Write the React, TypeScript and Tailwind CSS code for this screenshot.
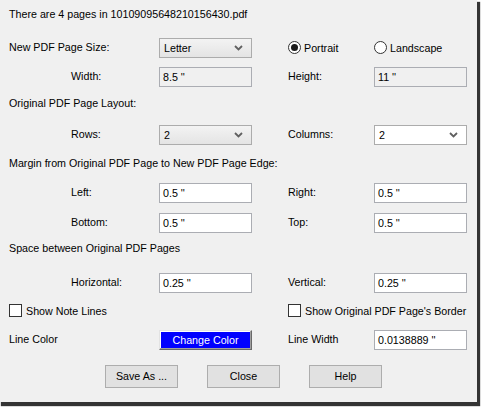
import React from 'react';

function Chevron() {
  return (
    <svg width="9" height="6" viewBox="0 0 9 6" className="shrink-0">
      <path d="M1 1 L4.5 4.5 L8 1" fill="none" stroke="#606060" strokeWidth="1.8" />
    </svg>
  );
}

function TextBox({ value, disabled }: { value: string; disabled?: boolean }) {
  return (
    <div
      className={`h-[20px] w-[93px] border border-[#abadb3] px-[3px] flex items-center ${
        disabled ? 'bg-[#f0f0f0]' : 'bg-white'
      }`}
    >
      {value}
    </div>
  );
}

function Combo({ value, editable }: { value: string; editable?: boolean }) {
  return (
    <div
      className={`h-[20px] w-[93px] border border-[#acacac] pl-[4px] pr-[8px] flex items-center justify-between ${
        editable ? 'bg-white' : 'bg-gradient-to-b from-[#f3f3f3] to-[#e4e4e4]'
      }`}
    >
      <span>{value}</span>
      <Chevron />
    </div>
  );
}

function Radio({ label, checked }: { label: string; checked?: boolean }) {
  return (
    <div className="flex items-center gap-[3px]">
      <div className="h-[13px] w-[13px] rounded-full border border-[#333] bg-white flex items-center justify-center">
        {checked && <div className="h-[7px] w-[7px] rounded-full bg-[#1a1a1a]" />}
      </div>
      <span>{label}</span>
    </div>
  );
}

function CheckBox({ label }: { label: string }) {
  return (
    <div className="flex items-center gap-[4px]">
      <div className="h-[13px] w-[13px] border border-[#333] bg-white" />
      <span>{label}</span>
    </div>
  );
}

function Button({ children }: { children: React.ReactNode }) {
  return (
    <div className="h-[23px] w-[73px] border border-[#adadad] bg-[#e1e1e1] flex items-center justify-center">
      {children}
    </div>
  );
}

// one row of the form: indented label + control, then right label + control
function FieldRow({
  label,
  control,
  rightLabel,
  rightControl,
}: {
  label: string;
  control: React.ReactNode;
  rightLabel: React.ReactNode;
  rightControl?: React.ReactNode;
}) {
  return (
    <div className="flex items-center h-[20px]">
      <div className="w-[150px] pl-[62px] pb-[2px]">{label}</div>
      {control}
      <div className="w-[36px]" />
      <div className="w-[86px] pb-[2px]">{rightLabel}</div>
      {rightControl}
    </div>
  );
}

export default function App() {
  return (
    <div className="w-[481px] h-[408px] bg-white font-['Liberation_Sans',Arial,sans-serif] text-[10.7px] text-black">
      <div className="w-[477px] h-[402px] bg-[#f0f0f0] shadow-[2px_3px_1px_1px_rgba(30,30,30,0.9)] pl-[9px] pt-[4px] flex flex-col">
        <div className="h-[20px] flex items-center">There are 4 pages in 10109095648210156430.pdf</div>

        <div className="mt-[14px] flex items-center h-[20px]">
          <div className="w-[150px] pb-[2px]">New PDF Page Size:</div>
          <Combo value="Letter" />
          <div className="w-[36px]" />
          <div className="w-[86px]">
            <Radio label="Portrait" checked />
          </div>
          <Radio label="Landscape" />
        </div>

        <div className="mt-[9px]">
          <FieldRow
            label="Width:"
            control={<TextBox value="8.5 ''" disabled />}
            rightLabel="Height:"
            rightControl={<TextBox value="11 ''" disabled />}
          />
        </div>

        <div className="mt-[6px] h-[20px] flex items-center">Original PDF Page Layout:</div>

        <div className="mt-[12px]">
          <FieldRow
            label="Rows:"
            control={<Combo value="2" />}
            rightLabel="Columns:"
            rightControl={<Combo value="2" editable />}
          />
        </div>

        <div className="mt-[8px] h-[20px] flex items-center">Margin from Original PDF Page to New PDF Page Edge:</div>

        <div className="mt-[10px]">
          <FieldRow
            label="Left:"
            control={<TextBox value="0.5 ''" />}
            rightLabel="Right:"
            rightControl={<TextBox value="0.5 ''" />}
          />
        </div>
        <div className="mt-[10px]">
          <FieldRow
            label="Bottom:"
            control={<TextBox value="0.5 ''" />}
            rightLabel="Top:"
            rightControl={<TextBox value="0.5 ''" />}
          />
        </div>

        <div className="mt-[5px] h-[20px] flex items-center">Space between Original PDF Pages</div>

        <div className="mt-[15px]">
          <FieldRow
            label="Horizontal:"
            control={<TextBox value="0.25 ''" />}
            rightLabel="Vertical:"
            rightControl={<TextBox value="0.25 ''" />}
          />
        </div>

        <div className="mt-[8px] h-[20px] flex items-center">
          <div className="w-[279px]">
            <CheckBox label="Show Note Lines" />
          </div>
          <CheckBox label="Show Original PDF Page's Border" />
        </div>

        <div className="mt-[9px] flex items-center h-[20px]">
          <div className="w-[150px] pb-[2px]">Line Color</div>
          <div className="h-[20px] w-[93px] border border-[#e3e3e3] border-r-[#696969] border-b-[#696969]">
            <div className="h-full w-full bg-white pt-[1px] pl-[1px] border-r border-b border-[#a0a0a0]">
              <div className="h-full w-full bg-[#0000ff] text-white flex items-center justify-center">Change Color</div>
            </div>
          </div>
          <div className="w-[36px]" />
          <div className="w-[86px] pb-[2px]">Line Width</div>
          <TextBox value="0.0138889 ''" />
        </div>

        <div className="mt-[15px] flex gap-[29px] pl-[96px]">
          <Button>Save As ...</Button>
          <Button>Close</Button>
          <Button>Help</Button>
        </div>
      </div>
    </div>
  );
}
